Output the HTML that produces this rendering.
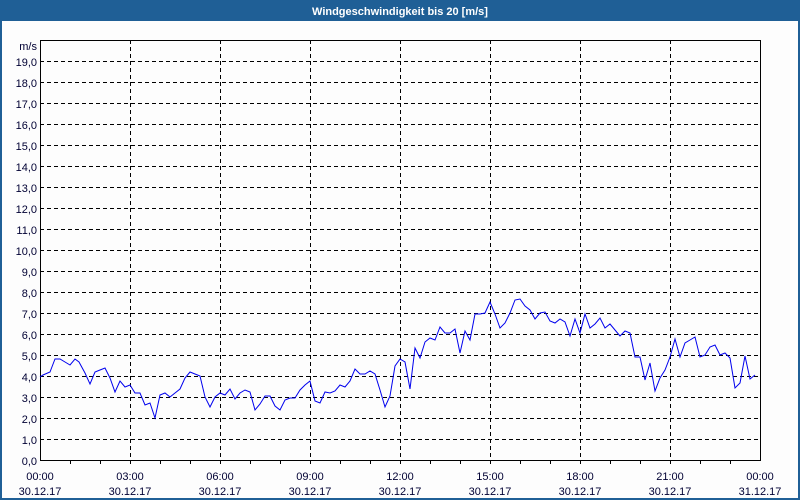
<!DOCTYPE html>
<html><head><style>
html,body{margin:0;padding:0;width:800px;height:500px;overflow:hidden;background:#fff}
svg{display:block}
text{font-family:"Liberation Sans","DejaVu Sans",sans-serif;font-size:11px;fill:#000033}
</style></head><body>
<svg width="800" height="500" xmlns="http://www.w3.org/2000/svg">
<rect x="0" y="0" width="800" height="500" fill="#1f5f96"/>
<rect x="2" y="21" width="796" height="477" fill="#fdfdfd"/>
<text x="400" y="15" text-anchor="middle" style="fill:#fff;font-weight:bold;font-size:11px">Windgeschwindigkeit bis 20 [m/s]</text>
<g stroke="#000" stroke-width="1" stroke-dasharray="4,3" shape-rendering="crispEdges">
<path d="M40 61.5H760M40 82.5H760M40 103.5H760M40 124.5H760M40 145.5H760M40 166.5H760M40 187.5H760M40 208.5H760M40 229.5H760M40 250.5H760M40 271.5H760M40 292.5H760M40 313.5H760M40 334.5H760M40 355.5H760M40 376.5H760M40 397.5H760M40 418.5H760M40 439.5H760"/>
<path d="M130.5 40V460M220.5 40V460M310.5 40V460M400.5 40V460M490.5 40V460M580.5 40V460M670.5 40V460"/>
</g>
<g stroke="#000" stroke-width="1" shape-rendering="crispEdges" fill="none">
<rect x="40.5" y="40.5" width="720" height="420"/>
<path d="M70.5 460v4M100.5 460v4M130.5 460v4M160.5 460v4M190.5 460v4M220.5 460v4M250.5 460v4M280.5 460v4M310.5 460v4M340.5 460v4M370.5 460v4M400.5 460v4M430.5 460v4M460.5 460v4M490.5 460v4M520.5 460v4M550.5 460v4M580.5 460v4M610.5 460v4M640.5 460v4M670.5 460v4M700.5 460v4M730.5 460v4"/>
</g>
<polyline fill="none" stroke="#0000ee" stroke-width="1" points="40,377 43,375 50,372 55,359 60,359 65,362 70,365 75,359 79,362 85,373 90,384 95,372 100,370 105,368 110,378 115,392 120,381 125,387 130,385 135,393 140,393 145,405 150,403 155,418 160,395 165,393 170,397 175,393 180,389 185,378 190,372 195,374 200,376 205,397 210,407 215,397 220,393 225,395 230,389 235,399 240,393 245,390 250,392 255,410 260,404 265,396 270,396 275,406 280,410 285,400 290,398 295,398 300,390 305,385 310,381 315,401 320,403 325,392 330,393 335,391 340,385 345,387 350,381 355,369 360,374 365,374 370,371 375,374 380,390 385,407 390,396 395,366 400,359 405,362 410,389 415,348 420,358 425,342 430,338 435,340 440,327 445,333 450,333 455,329 460,353 465,331 470,340 475,314 480,314 485,313 490,302 495,314 500,328 505,323 510,313 515,300 520,299 525,306 530,310 535,319 540,313 545,312 550,321 555,323 560,319 565,322 570,336 575,319 580,333 585,314 590,328 595,324 600,318 605,328 610,324 615,330 620,336 625,331 630,333 635,357 640,357 645,380 650,363 655,391 660,378 665,370 670,357 675,339 680,357 685,343 690,340 695,337 700,357 705,355 710,347 715,345 720,355 725,353 730,358 735,388 740,383 745,356 750,379 755,375"/>
<g text-anchor="end">
<text x="37" y="50">m/s</text>
<text x="37" y="66">19,0</text><text x="37" y="87">18,0</text><text x="37" y="108">17,0</text><text x="37" y="129">16,0</text><text x="37" y="150">15,0</text><text x="37" y="171">14,0</text><text x="37" y="192">13,0</text><text x="37" y="213">12,0</text><text x="37" y="234">11,0</text><text x="37" y="255">10,0</text><text x="37" y="276">9,0</text><text x="37" y="297">8,0</text><text x="37" y="318">7,0</text><text x="37" y="339">6,0</text><text x="37" y="360">5,0</text><text x="37" y="381">4,0</text><text x="37" y="402">3,0</text><text x="37" y="423">2,0</text><text x="37" y="444">1,0</text><text x="37" y="465">0,0</text>
</g>
<g text-anchor="middle">
<text x="40" y="480">00:00</text><text x="130" y="480">03:00</text><text x="220" y="480">06:00</text><text x="310" y="480">09:00</text><text x="400" y="480">12:00</text><text x="490" y="480">15:00</text><text x="580" y="480">18:00</text><text x="670" y="480">21:00</text><text x="760" y="480">00:00</text>
<text x="40" y="495">30.12.17</text><text x="130" y="495">30.12.17</text><text x="220" y="495">30.12.17</text><text x="310" y="495">30.12.17</text><text x="400" y="495">30.12.17</text><text x="490" y="495">30.12.17</text><text x="580" y="495">30.12.17</text><text x="670" y="495">30.12.17</text><text x="760" y="495">31.12.17</text>
</g>
</svg>
</body></html>
